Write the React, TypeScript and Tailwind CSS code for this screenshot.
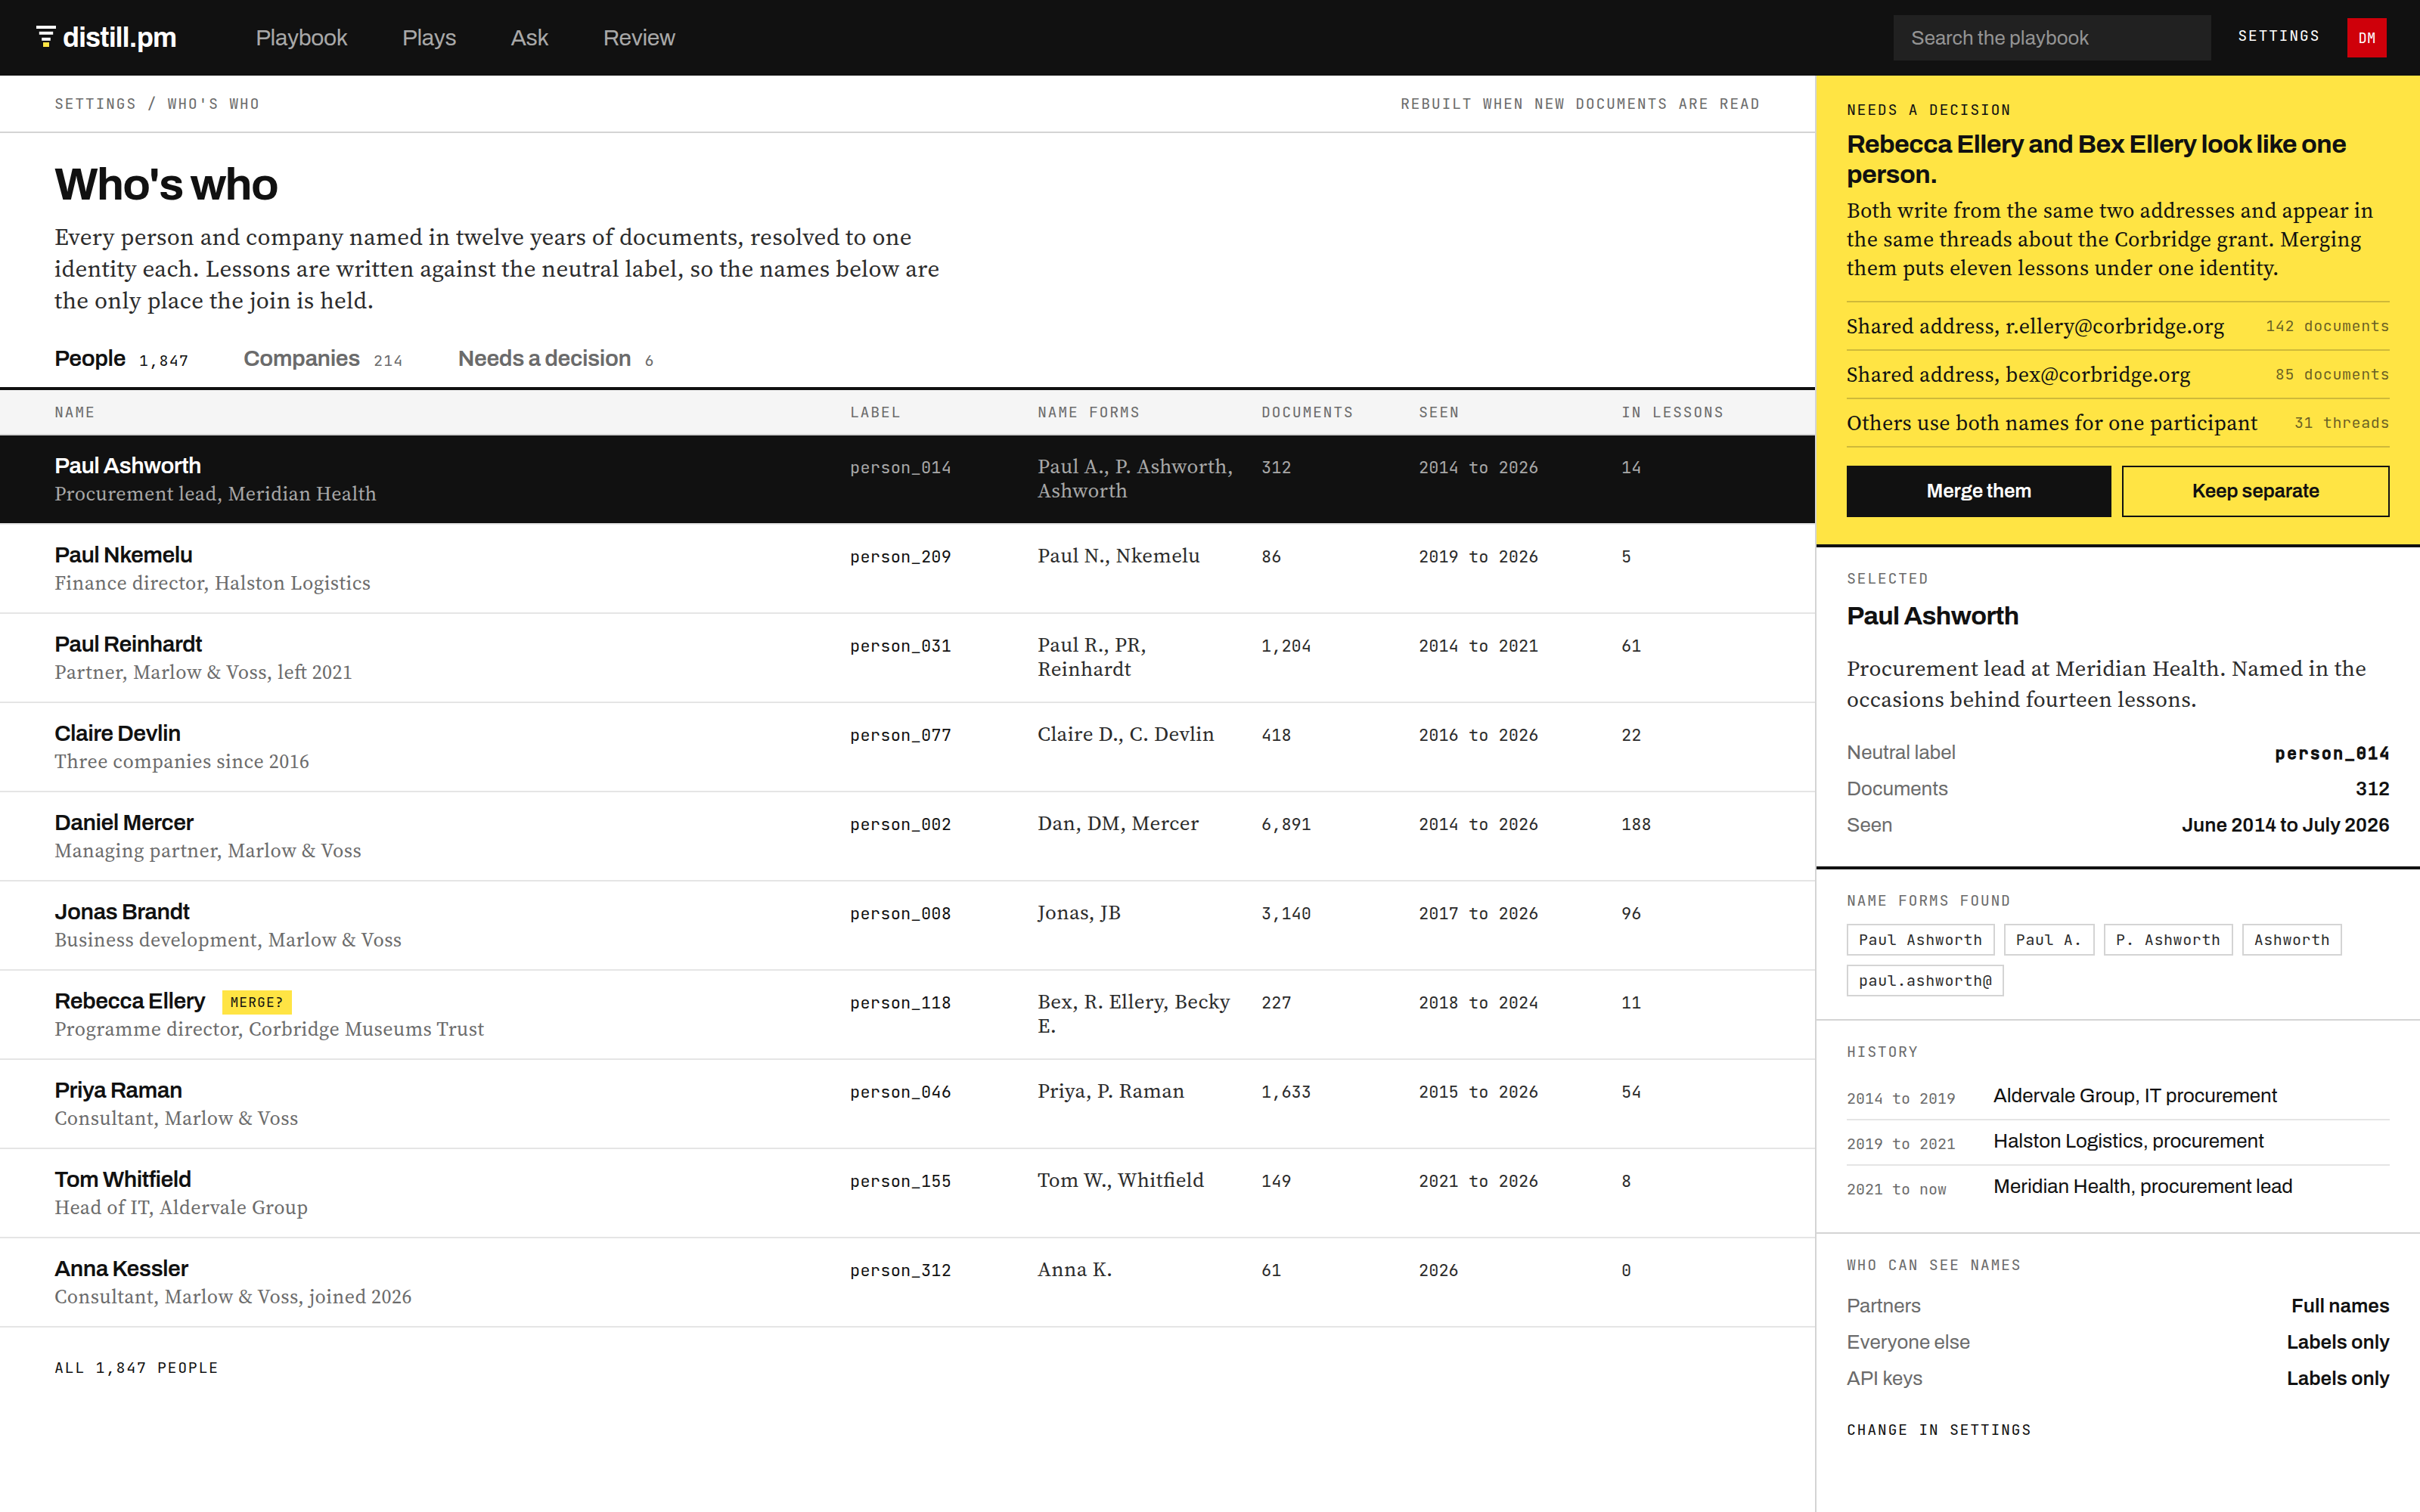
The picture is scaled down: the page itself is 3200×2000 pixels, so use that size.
import React from 'react';

const sans = "font-['Archivo','Liberation_Sans',sans-serif]";
const serif = "font-['Source_Serif_4','Liberation_Serif',serif] [font-feature-settings:'liga'_1]";
const mono = "font-['JetBrains_Mono','DejaVu_Sans_Mono',monospace]";

type Person = {
  name: string;
  role: string;
  label: string;
  forms: string;
  docs: string;
  seen: string;
  lessons: string;
  merge?: boolean;
};

const people: Person[] = [
  { name: 'Paul Ashworth', role: 'Procurement lead, Meridian Health', label: 'person_014', forms: 'Paul A., P. Ashworth, Ashworth', docs: '312', seen: '2014 to 2026', lessons: '14' },
  { name: 'Paul Nkemelu', role: 'Finance director, Halston Logistics', label: 'person_209', forms: 'Paul N., Nkemelu', docs: '86', seen: '2019 to 2026', lessons: '5' },
  { name: 'Paul Reinhardt', role: 'Partner, Marlow & Voss, left 2021', label: 'person_031', forms: 'Paul R., PR, Reinhardt', docs: '1,204', seen: '2014 to 2021', lessons: '61' },
  { name: 'Claire Devlin', role: 'Three companies since 2016', label: 'person_077', forms: 'Claire D., C. Devlin', docs: '418', seen: '2016 to 2026', lessons: '22' },
  { name: 'Daniel Mercer', role: 'Managing partner, Marlow & Voss', label: 'person_002', forms: 'Dan, DM, Mercer', docs: '6,891', seen: '2014 to 2026', lessons: '188' },
  { name: 'Jonas Brandt', role: 'Business development, Marlow & Voss', label: 'person_008', forms: 'Jonas, JB', docs: '3,140', seen: '2017 to 2026', lessons: '96' },
  { name: 'Rebecca Ellery', role: 'Programme director, Corbridge Museums Trust', label: 'person_118', forms: 'Bex, R. Ellery, Becky E.', docs: '227', seen: '2018 to 2024', lessons: '11', merge: true },
  { name: 'Priya Raman', role: 'Consultant, Marlow & Voss', label: 'person_046', forms: 'Priya, P. Raman', docs: '1,633', seen: '2015 to 2026', lessons: '54' },
  { name: 'Tom Whitfield', role: 'Head of IT, Aldervale Group', label: 'person_155', forms: 'Tom W., Whitfield', docs: '149', seen: '2021 to 2026', lessons: '8' },
  { name: 'Anna Kessler', role: 'Consultant, Marlow & Voss, joined 2026', label: 'person_312', forms: 'Anna K.', docs: '61', seen: '2026', lessons: '0' },
];

const columns = 'grid grid-cols-[1fr_216px_264px_176px_236px_184px] gap-x-8 px-[72px]';

function Eyebrow({ children, className = 'text-[#6b6b6b]' }: { children: React.ReactNode; className?: string }) {
  return <div className={`${mono} text-[20px] leading-[24px] tracking-[0.08em] uppercase ${className}`}>{children}</div>;
}

function Header() {
  return (
    <header className="flex h-[100px] shrink-0 items-center bg-[#111] pl-12 pr-11">
      <svg width="26" height="28" viewBox="0 0 26 28" className="mr-[9px] -mt-1">
        <rect x="0" y="0" width="26" height="4" fill="#fff" />
        <rect x="3.8" y="7.8" width="18.4" height="4" fill="#fff" />
        <rect x="7.2" y="15.8" width="11.6" height="4" fill="#fff" />
        <rect x="9" y="22" width="8" height="6" fill="#ffe444" />
      </svg>
      <div className="w-[255px] text-[36px] leading-[40px] font-bold tracking-[-0.02em] text-white">distill.pm</div>
      <nav className="flex gap-[72px] text-[30px] leading-[40px] tracking-[-0.0125em] text-[#a8a8a8]">
        <span>Playbook</span>
        <span>Plays</span>
        <span>Ask</span>
        <span>Review</span>
      </nav>
      <div className="ml-auto flex items-center">
        <div className="flex h-[60px] w-[420px] items-center bg-[#212121] pl-[23px] text-[26px] leading-[36px] text-[#949494]">Search the playbook</div>
        <div className={`${mono} ml-[35px] pb-[6px] text-[20px] leading-[24px] tracking-[0.08em] text-white`}>SETTINGS</div>
        <div className={`${mono} ml-9 flex h-[52px] w-[52px] items-center justify-center bg-[#cf000a] pt-[2px] text-[19px] leading-[24px] text-white`}>DM</div>
      </div>
    </header>
  );
}

function Tab({ label, count, active }: { label: string; count: string; active?: boolean }) {
  return (
    <div className={`flex items-baseline gap-[18px] ${active ? 'text-[#111]' : 'text-[#6b6b6b]'}`}>
      <span className="text-[30px] leading-[36px] font-semibold tracking-[-0.015em]">{label}</span>
      <span className={`${mono} text-[20px] leading-[36px] tracking-[0.06em]`}>{count}</span>
    </div>
  );
}

function PersonRow({ p, selected }: { p: Person; selected: boolean }) {
  const soft = selected ? 'text-[#a8a8a8]' : 'text-[#2b2b2b]';
  const cell = `${mono} text-[22px] leading-[32px]`;
  return (
    <div className={`${columns} h-[118px] items-baseline border-b-2 border-[#e5e5e5] pt-[22px] ${selected ? 'bg-[#111]' : ''}`}>
      <div>
        <div className={`text-[30px] leading-[36px] font-semibold tracking-[-0.018em] ${selected ? 'text-white' : 'text-[#111]'}`}>
          {p.name}
          {p.merge && (
            <span className={`${mono} ml-[23px] inline-block bg-[#ffe444] px-[10px] align-[2px] text-[18px] leading-[32px] font-normal tracking-[0.06em] text-[#111]`}>MERGE?</span>
          )}
        </div>
        <div className={`${serif} text-[26px] leading-[38px] tracking-[0.0174em] ${selected ? 'text-[#a8a8a8]' : 'text-[#6b6b6b]'}`}>{p.role}</div>
      </div>
      <div className={`${cell} tracking-[0.01em] ${selected ? 'text-[#a8a8a8]' : 'text-[#111]'}`}>{p.label}</div>
      <div className={`${serif} text-[27px] leading-[32px] tracking-[0.014em] ${soft}`}>{p.forms}</div>
      <div className={`${cell} ${soft}`}>{p.docs}</div>
      <div className={`${cell} ${soft}`}>{p.seen}</div>
      <div className={`${cell} ${soft}`}>{p.lessons}</div>
    </div>
  );
}

function Fact({ k, v, code }: { k: string; v: string; code?: boolean }) {
  return (
    <div className="flex h-12 items-baseline justify-between text-[26px] leading-[48px]">
      <span className="text-[#6b6b6b]">{k}</span>
      {code ? (
        <span className={`${mono} -mr-[1.6px] text-[22px] leading-[48px] tracking-[2.1px] text-[#111] [-webkit-text-stroke:1.5px_#111]`}>{v}</span>
      ) : (
        <span className="font-semibold text-[#111]">{v}</span>
      )}
    </div>
  );
}

function Evidence({ text, count }: { text: string; count: string }) {
  return (
    <div className="flex h-16 items-center justify-between border-b-2 border-[#111]/20">
      <span className={`${serif} text-[28px] leading-[40px] tracking-[0.0142em]`}>{text}</span>
      <span className={`${mono} text-[20px] leading-[24px] tracking-[0.03em] text-[#111]/65`}>{count}</span>
    </div>
  );
}

function HistoryRow({ when, what, last }: { when: string; what: string; last?: boolean }) {
  return (
    <div className={`flex pt-[10px] ${last ? 'h-[58px]' : 'h-[60px] border-b-2 border-[#e5e5e5]'}`}>
      <span className={`${mono} mt-1 w-[194px] text-[20px] leading-[35px] text-[#6b6b6b]`}>{when}</span>
      <span className="text-[26px] leading-[35px] text-[#111]">{what}</span>
    </div>
  );
}

const chips = ['Paul Ashworth', 'Paul A.', 'P. Ashworth', 'Ashworth', 'paul.ashworth@'];

function SidePanel() {
  return (
    <aside className="w-[800px] shrink-0 border-l-2 border-[#d4d4d4] bg-white">
      <section className="h-[624px] border-b-4 border-[#111] bg-[#ffe444] px-10 pt-[33px] text-[#111]">
        <Eyebrow className="text-[#111]">Needs a decision</Eyebrow>
        <h2 className="mt-[14px] text-[34px] leading-[40px] font-bold tracking-[-0.018em]">Rebecca Ellery and Bex Ellery look like one person.</h2>
        <p className={`${serif} mt-2 mb-[25px] text-[28px] leading-[38px] tracking-[0.0138em]`}>
          Both write from the same two addresses and appear in the same threads about the Corbridge grant. Merging them puts eleven lessons under one identity.
        </p>
        <div className="border-t-2 border-[#111]/20">
          <Evidence text="Shared address, r.ellery@corbridge.org" count="142 documents" />
          <Evidence text="Shared address, bex@corbridge.org" count="85 documents" />
          <Evidence text="Others use both names for one participant" count="31 threads" />
        </div>
        <div className="mt-6 flex gap-[14px] text-[26px] leading-[36px] font-semibold tracking-[-0.01em]">
          <button className="h-[68px] w-[350px] bg-[#111] pb-0.5 text-white">Merge them</button>
          <button className="h-[68px] flex-1 border-2 border-[#111] pb-0.5">Keep separate</button>
        </div>
      </section>
      <section className="h-[426px] border-b-4 border-[#111] px-10 pt-[29px]">
        <Eyebrow>Selected</Eyebrow>
        <h2 className="mt-[18px] text-[34px] leading-[40px] font-bold tracking-[-0.018em] text-[#111]">Paul Ashworth</h2>
        <p className={`${serif} mt-[29px] mb-[26px] text-[29px] leading-[40.5px] tracking-[0.0113em] text-[#2b2b2b]`}>
          Procurement lead at Meridian Health. Named in the occasions behind fourteen lessons.
        </p>
        <Fact k="Neutral label" v="person_014" code />
        <Fact k="Documents" v="312" />
        <Fact k="Seen" v="June 2014 to July 2026" />
      </section>
      <section className="h-[200px] border-b-2 border-[#d4d4d4] px-10 pt-[29px]">
        <Eyebrow>Name forms found</Eyebrow>
        <div className={`${mono} mt-[19px] flex flex-wrap gap-3 text-[20px] leading-[38px] tracking-[0.03em] text-[#2b2b2b]`}>
          {chips.map((c) => (
            <span key={c} className="border-2 border-[#d4d4d4] px-[14px]">{c}</span>
          ))}
        </div>
      </section>
      <section className="h-[282px] border-b-2 border-[#d4d4d4] px-10 pt-[29px]">
        <Eyebrow>History</Eyebrow>
        <div className="mt-[19px]">
          <HistoryRow when="2014 to 2019" what="Aldervale Group, IT procurement" />
          <HistoryRow when="2019 to 2021" what="Halston Logistics, procurement" />
          <HistoryRow when="2021 to now" what="Meridian Health, procurement lead" last />
        </div>
      </section>
      <section className="px-10 pt-[29px]">
        <Eyebrow>Who can see names</Eyebrow>
        <div className="mt-[18px] mb-8">
          <Fact k="Partners" v="Full names" />
          <Fact k="Everyone else" v="Labels only" />
          <Fact k="API keys" v="Labels only" />
        </div>
        <Eyebrow className="text-[#111]">Change in settings</Eyebrow>
      </section>
    </aside>
  );
}

export default function App() {
  return (
    <div className={`${sans} flex h-[2000px] w-[3200px] flex-col overflow-hidden bg-white antialiased`}>
      <Header />
      <div className="flex flex-1">
        <main className="w-[2400px] shrink-0">
          <div className="flex h-[76px] items-center justify-between border-b-2 border-[#d4d4d4] px-[72px]">
            <Eyebrow>Settings / Who's who</Eyebrow>
            <Eyebrow>Rebuilt when new documents are read</Eyebrow>
          </div>
          <div className="h-[340px] border-b-4 border-[#111] px-[72px] pt-[38px]">
            <h1 className="text-[60px] leading-[60px] font-bold tracking-[-0.03em] text-[#111]">Who's who</h1>
            <p className={`${serif} mt-[18px] mb-[38px] w-[1200px] text-[31px] leading-[42px] tracking-[0.0101em] text-[#2b2b2b]`}>
              Every person and company named in twelve years of documents, resolved to one identity each. Lessons are written against the neutral label, so the names below are the only place the join is held.
            </p>
            <div className="flex gap-[72px]">
              <Tab label="People" count="1,847" active />
              <Tab label="Companies" count="214" />
              <Tab label="Needs a decision" count="6" />
            </div>
          </div>
          <div className={`${columns} h-[60px] items-center border-b-2 border-[#d4d4d4] bg-[#f5f5f5]`}>
            <Eyebrow>Name</Eyebrow>
            <Eyebrow>Label</Eyebrow>
            <Eyebrow>Name forms</Eyebrow>
            <Eyebrow>Documents</Eyebrow>
            <Eyebrow>Seen</Eyebrow>
            <Eyebrow>In lessons</Eyebrow>
          </div>
          {people.map((p, i) => (
            <PersonRow key={p.label} p={p} selected={i === 0} />
          ))}
          <div className="px-[72px] pt-[41px]">
            <Eyebrow className="text-[#111]">All 1,847 people</Eyebrow>
          </div>
        </main>
        <SidePanel />
      </div>
    </div>
  );
}
